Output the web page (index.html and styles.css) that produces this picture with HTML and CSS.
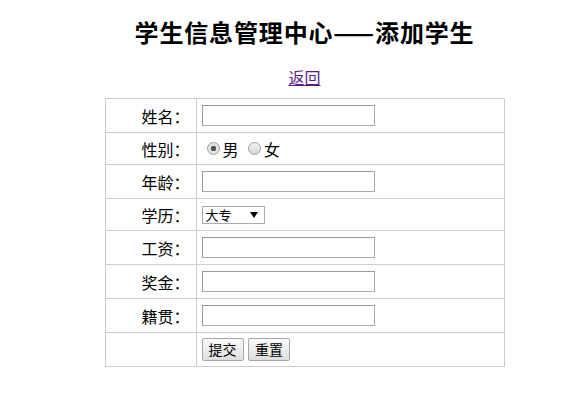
FILE: index.html
```html
<!DOCTYPE html>
<html>
<head>
    <meta charset="utf-8">
    <title>学生信息管理中心——添加学生</title>
    <link rel="stylesheet" href="styles.css">
</head>
<body>
<div class="page">
    <h2 class="title">学生信息管理中心——添加学生</h2>
    <p class="back"><a href="#">返回</a></p>
    <form class="student-form">
        <table class="form-table">
            <tbody>
            <tr>
                <td class="label">姓名：</td>
                <td><input type="text" class="text-input" name="name"></td>
            </tr>
            <tr class="short-row">
                <td class="label">性别：</td>
                <td>
                    <label class="radio"><input type="radio" name="sex" value="男" checked>男</label>
                    <label class="radio"><input type="radio" name="sex" value="女">女</label>
                </td>
            </tr>
            <tr>
                <td class="label">年龄：</td>
                <td><input type="text" class="text-input" name="age"></td>
            </tr>
            <tr class="short-row">
                <td class="label">学历：</td>
                <td>
                    <select class="select" name="edu">
                        <option>大专</option>
                        <option>本科</option>
                        <option>硕士</option>
                        <option>博士</option>
                    </select>
                </td>
            </tr>
            <tr>
                <td class="label">工资：</td>
                <td><input type="text" class="text-input" name="salary"></td>
            </tr>
            <tr>
                <td class="label">奖金：</td>
                <td><input type="text" class="text-input" name="bonus"></td>
            </tr>
            <tr>
                <td class="label">籍贯：</td>
                <td><input type="text" class="text-input" name="place"></td>
            </tr>
            <tr>
                <td></td>
                <td>
                    <button type="submit" class="btn">提交</button>
                    <button type="reset" class="btn">重置</button>
                </td>
            </tr>
            </tbody>
        </table>
    </form>
</div>
</body>
</html>
```

FILE: styles.css
```css
body {
    margin: 0;
    background-color: #fff;
    font-family: "Noto Sans CJK SC", "Liberation Sans", sans-serif;
    color: #000;
}

.page {
    padding: 15px 0 0 27px;
    text-align: center;
}

.title {
    margin: 0;
    font-size: 24px;
    line-height: 34px;
    font-weight: bold;
    letter-spacing: 0.85px;
}

.back {
    margin: 18px 0 0;
    font-size: 16px;
    line-height: 20px;
}

.back a {
    color: #551a8b;
}

.student-form {
    margin-top: 11px;
}

.form-table {
    border-collapse: collapse;
    width: 400px;
    margin: 0 auto;
    text-align: left;
}

.form-table tr {
    height: 34px;
}

.form-table tr.short-row {
    height: 32px;
}

.form-table td {
    border: 1px solid #ccc;
    padding: 0 5px;
    font-size: 16px;
    line-height: 20px;
    vertical-align: middle;
}

.form-table td.label {
    width: 79px;
    text-align: right;
    padding-right: 6px;
}

.text-input {
    box-sizing: border-box;
    width: 173px;
    height: 21px;
    margin: 0;
    border: 1px solid #a9a9a9;
    border-top-color: #999;
    border-left-color: #999;
    padding: 1px 2px;
    font-size: 13px;
    display: block;
}

.radio {
    display: inline-flex;
    align-items: center;
    margin-right: 1px;
}

.radio input {
    appearance: none;
    -webkit-appearance: none;
    width: 13px;
    height: 13px;
    margin: 0 3px 0 5px;
    border: 1px solid #a0a0a0;
    border-radius: 50%;
    background: linear-gradient(#f4f4f4, #d4d4d4);
    box-sizing: border-box;
}

.radio input:checked {
    background: radial-gradient(circle, #555 0, #555 2.5px, #e4e4e4 3px);
}

.select {
    appearance: none;
    -webkit-appearance: none;
    box-sizing: border-box;
    width: 63px;
    height: 18px;
    margin: 0;
    padding: 0 0 0 3px;
    border: 1px solid #a9a9a9;
    border-radius: 0;
    font-family: "Noto Sans CJK SC", sans-serif;
    font-size: 13px;
    line-height: 16px;
    color: #000;
    background: #fff url("data:image/svg+xml,%3Csvg xmlns='http://www.w3.org/2000/svg' width='8' height='6'%3E%3Cpath d='M0 0h8L4 6z' fill='%23000'/%3E%3C/svg%3E") no-repeat right 6px center;
    display: block;
}

.btn {
    box-sizing: border-box;
    height: 23px;
    padding: 0 6px;
    margin: 0 1px 0 0;
    border: 1px solid #a6a6a6;
    border-radius: 2px;
    background: linear-gradient(#fbfbfb, #dedede);
    font-family: "Noto Sans CJK SC", sans-serif;
    font-size: 14px;
    line-height: 19px;
    color: #000;
}
```
